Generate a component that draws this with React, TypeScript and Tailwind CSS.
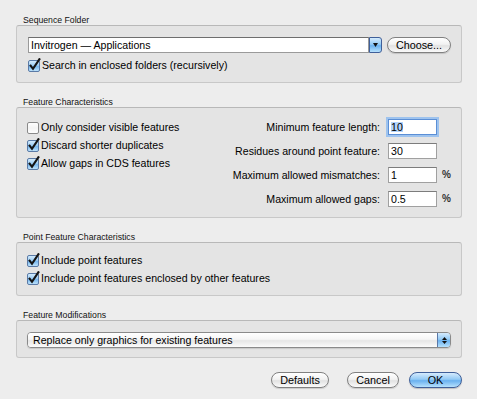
import React from "react";

function Check({ checked }: { checked: boolean }) {
  return (
    <svg width="13" height="14" viewBox="0 0 13 14" className="shrink-0">
      <defs>
        <linearGradient id="cbBlue" x1="0" y1="0" x2="0" y2="1">
          <stop offset="0" stopColor="#d9eefd" />
          <stop offset="0.45" stopColor="#9ccdf5" />
          <stop offset="0.55" stopColor="#78b8ef" />
          <stop offset="1" stopColor="#c4e6fc" />
        </linearGradient>
        <linearGradient id="cbWhite" x1="0" y1="0" x2="0" y2="1">
          <stop offset="0" stopColor="#ffffff" />
          <stop offset="0.5" stopColor="#f4f4f4" />
          <stop offset="1" stopColor="#ffffff" />
        </linearGradient>
      </defs>
      <rect
        x="0.5"
        y="2.5"
        width="11"
        height="11"
        rx="1.5"
        fill={checked ? "url(#cbBlue)" : "url(#cbWhite)"}
        stroke={checked ? "#5a7aa6" : "#8a8a8a"}
      />
      {checked && (
        <path
          d="M2.6 7.6 L5 10.8 L11.4 1.2"
          stroke="#141414"
          strokeWidth="2.1"
          fill="none"
          strokeLinecap="square"
        />
      )}
    </svg>
  );
}

function CheckRow({ checked, label }: { checked: boolean; label: string }) {
  return (
    <div className="flex h-[18px] items-center gap-[1px]">
      <Check checked={checked} />
      <span className="text-[10.6px] leading-none text-black whitespace-nowrap">{label}</span>
    </div>
  );
}

function Header({ children }: { children: React.ReactNode }) {
  return (
    <div className="h-[10px] pl-[7px] text-[8.7px] leading-[10px] text-[#111] whitespace-nowrap">
      {children}
    </div>
  );
}

const boxCls =
  "rounded-[3px] border border-[#c8c8c8] border-t-[#b8b8b8] bg-[#e4e4e4]";

const aquaBtn =
  "flex h-[16px] items-center justify-center rounded-full border border-[#808080] bg-[linear-gradient(to_bottom,#ffffff_0%,#f2f2f2_45%,#e2e2e2_55%,#fafafa_100%)] shadow-[0_1px_1px_rgba(0,0,0,0.15)] text-[10.8px] leading-none text-black";

const blueBtn =
  "flex h-[16px] items-center justify-center rounded-full border border-[#3f5f99] bg-[linear-gradient(to_bottom,#d5ebfd_0%,#93caf5_45%,#6ab1ef_55%,#b6e1fd_100%)] shadow-[0_1px_1px_rgba(0,0,0,0.2)] text-[10.8px] leading-none text-black";

function Field({
  value,
  focused,
  pct,
}: {
  value: string;
  focused?: boolean;
  pct?: boolean;
}) {
  return (
    <div className="flex items-center">
      <div
        className={
          "flex h-[16px] w-[49px] items-center bg-white pl-[2px] text-[10.6px] leading-none text-black " +
          (focused
            ? "border border-[#5b8fd6] shadow-[0_0_0_2px_#9ec3ee]"
            : "border border-[#a0a0a0] border-t-[#7c7c7c]")
        }
      >
        {focused ? <span className="bg-[#b4d4fb]">{value}</span> : value}
      </div>
      <div className="w-[17px] pl-[5px] text-[10px] font-bold leading-none text-[#333]">
        {pct ? "%" : ""}
      </div>
    </div>
  );
}

function LabeledField({
  label,
  value,
  focused,
  pct,
}: {
  label: string;
  value: string;
  focused?: boolean;
  pct?: boolean;
}) {
  return (
    <div className="flex h-[16px] items-center justify-end gap-[8px]">
      <span className="text-[10.6px] leading-none text-black whitespace-nowrap">{label}</span>
      <Field value={value} focused={focused} pct={pct} />
    </div>
  );
}

export default function App() {
  return (
    <div className="h-[399px] w-[477px] overflow-hidden bg-[#ededed] font-['Liberation_Sans',Arial,sans-serif]">
      <div className="flex flex-col pl-[16px] pr-[15px] pt-[15px]">
        {/* Sequence Folder */}
        <Header>Sequence Folder</Header>
        <div className={boxCls + " h-[58px] pl-[11px] pr-[10px] pt-[11px]"}>
          <div className="flex h-[16px] items-stretch gap-[5px]">
            <div className="flex flex-1 items-stretch">
              <div className="flex flex-1 items-center border border-[#9a9a9a] border-t-[#6e6e6e] bg-white pl-[2px] text-[10.6px] leading-none text-black">
                Invitrogen — Applications
              </div>
              <div className="flex w-[13px] items-center justify-center rounded-r-[3px] border border-[#3f5f99] bg-[linear-gradient(to_bottom,#d5ebfd_0%,#93caf5_45%,#6ab1ef_55%,#b6e1fd_100%)]">
                <svg width="5" height="4" viewBox="0 0 5 4">
                  <path d="M0 0 H5 L2.5 4 Z" fill="#111" />
                </svg>
              </div>
            </div>
            <div className={aquaBtn + " w-[64px]"}>Choose...</div>
          </div>
          <div className="mt-[3px]">
            <CheckRow checked label="Search in enclosed folders (recursively)" />
          </div>
        </div>

        {/* Feature Characteristics */}
        <div className="mt-[14px]">
          <Header>Feature Characteristics</Header>
        </div>
        <div className={boxCls + " flex h-[111px] justify-between pl-[10px] pr-[7px] pt-[10px]"}>
          <div className="flex flex-col">
            <CheckRow checked={false} label="Only consider visible features" />
            <CheckRow checked label="Discard shorter duplicates" />
            <CheckRow checked label="Allow gaps in CDS features" />
          </div>
          <div className="flex flex-col gap-[8px] pt-[1px]">
            <LabeledField label="Minimum feature length:" value="10" focused />
            <LabeledField label="Residues around point feature:" value="30" />
            <LabeledField label="Maximum allowed mismatches:" value="1" pct />
            <LabeledField label="Maximum allowed gaps:" value="0.5" pct />
          </div>
        </div>

        {/* Point Feature Characteristics */}
        <div className="mt-[14px]">
          <Header>Point Feature Characteristics</Header>
        </div>
        <div className={boxCls + " h-[54px] pl-[10px] pt-[8px]"}>
          <CheckRow checked label="Include point features" />
          <CheckRow checked label="Include point features enclosed by other features" />
        </div>

        {/* Feature Modifications */}
        <div className="mt-[14px]">
          <Header>Feature Modifications</Header>
        </div>
        <div className={boxCls + " h-[38px] pl-[10px] pr-[10px] pt-[11px]"}>
          <div className="flex h-[16px] items-stretch overflow-hidden rounded-[4px] border border-[#8a8a8a] shadow-[0_1px_1px_rgba(0,0,0,0.12)]">
            <div className="flex flex-1 items-center bg-[linear-gradient(to_bottom,#ffffff_0%,#f5f5f5_45%,#e6e6e6_55%,#fbfbfb_100%)] pl-[5px] text-[10.6px] leading-none text-black">
              Replace only graphics for existing features
            </div>
            <div className="flex w-[13px] flex-col items-center justify-center gap-[1px] border-l border-[#5a78a8] bg-[linear-gradient(to_bottom,#d5ebfd_0%,#93caf5_45%,#6ab1ef_55%,#b6e1fd_100%)]">
              <svg width="5" height="3" viewBox="0 0 5 3">
                <path d="M0 3 H5 L2.5 0 Z" fill="#111" />
              </svg>
              <svg width="5" height="3" viewBox="0 0 5 3">
                <path d="M0 0 H5 L2.5 3 Z" fill="#111" />
              </svg>
            </div>
          </div>
        </div>

        {/* Buttons */}
        <div className="mt-[14px] flex h-[16px] justify-end">
          <div className={aquaBtn + " w-[58px]"}>Defaults</div>
          <div className={aquaBtn + " ml-[18px] w-[52px]"}>Cancel</div>
          <div className={blueBtn + " ml-[10px] w-[53px]"}>OK</div>
        </div>
      </div>
    </div>
  );
}
